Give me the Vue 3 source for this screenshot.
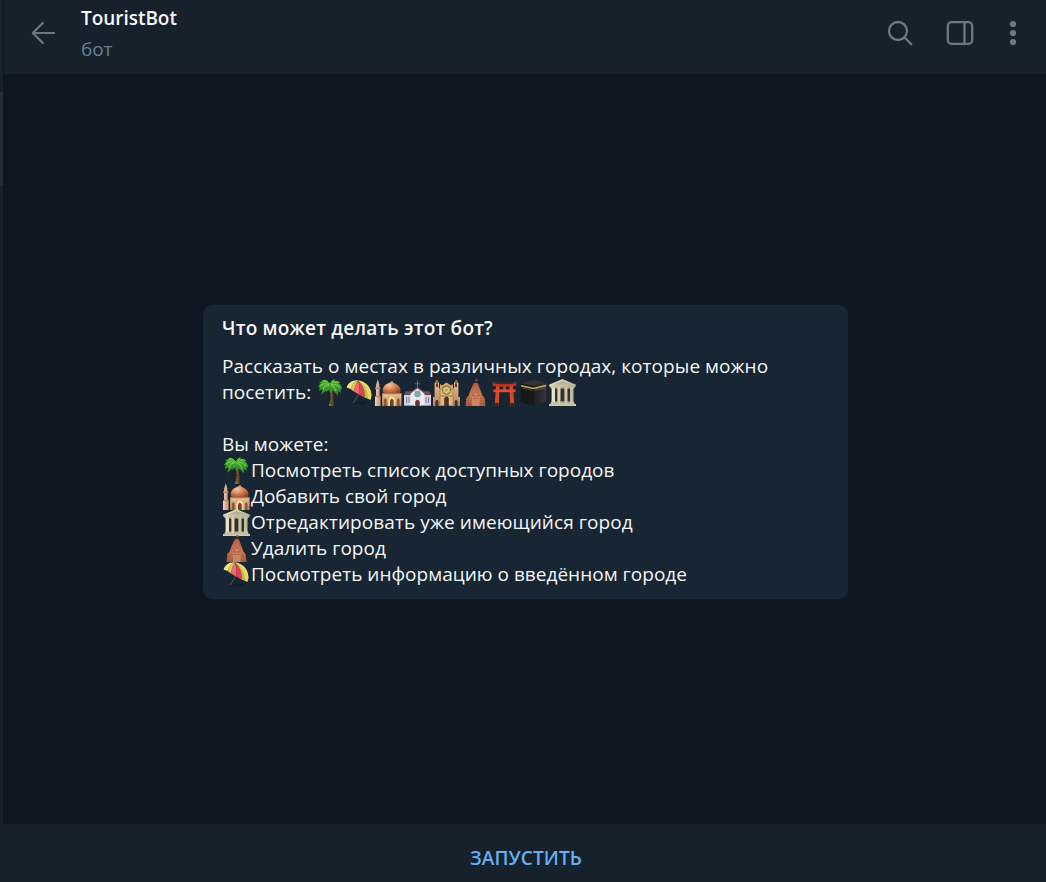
<script setup>
const places = ['palm', 'umbrella', 'mosque', 'church', 'synagogue', 'temple', 'torii', 'kaaba', 'classical']
const abilities = [
  { icon: 'palm', text: 'Посмотреть список доступных городов' },
  { icon: 'mosque', text: 'Добавить свой город', fit: 'tight' },
  { icon: 'classical', text: 'Отредактировать уже имеющийся город', fit: 'loose' },
  { icon: 'temple', text: 'Удалить город' },
  { icon: 'umbrella', text: 'Посмотреть информацию о введённом городе', fit: 'slight' },
]
</script>

<template>
  <div class="window">
    <svg class="sprites" aria-hidden="true">
      <defs>
        <linearGradient id="leaf" x1="0" y1="0" x2="0" y2="1"><stop offset="0" stop-color="#55b93a" /><stop offset="1" stop-color="#2a7d22" /></linearGradient>
        <linearGradient id="trunk"><stop offset="0" stop-color="#a07a45" /><stop offset="1" stop-color="#57401f" /></linearGradient>
        <radialGradient id="dome" cx=".35" cy=".3" r=".75"><stop offset="0" stop-color="#f6c7a4" /><stop offset=".5" stop-color="#d58354" /><stop offset="1" stop-color="#8f4526" /></radialGradient>
        <linearGradient id="sand" x1="0" y1="0" x2="0" y2="1"><stop offset="0" stop-color="#ecc392" /><stop offset="1" stop-color="#b98455" /></linearGradient>
        <linearGradient id="minaret"><stop offset="0" stop-color="#f3d0ba" /><stop offset="1" stop-color="#c98d70" /></linearGradient>
        <linearGradient id="clay" x1="0" y1="0" x2="0" y2="1"><stop offset="0" stop-color="#a95b3d" /><stop offset=".5" stop-color="#cf7f5b" /><stop offset="1" stop-color="#a95c3c" /></linearGradient>
        <linearGradient id="stone" x1="0" y1="0" x2="1" y2="0"><stop offset="0" stop-color="#ece6cc" /><stop offset="1" stop-color="#bcb596" /></linearGradient>
        <linearGradient id="cloth"><stop offset="0" stop-color="#1b1c1f" /><stop offset="1" stop-color="#37383c" /></linearGradient>

        <symbol id="palm" viewBox="0 0 27 27">
          <path d="M12.2 11Q15.3 18 11.7 27H16.5Q17.2 17 14.7 10Z" fill="url(#trunk)" />
          <path d="M13 15h2.5M13.2 18h2.8M12.9 21h3M12.3 24h3.7" stroke="#4b371d" stroke-width=".7" />
          <path d="M13 5Q9-1 5 1.3L6 2 1.8 3.2 4 4 .7 8 2.8 7.8 2 12 5.4 10 4.4 16 9.4 11.2 9.4 13.2 12.2 10.5 14.2 13 15.8 11.4 21 16.4 21.4 12 24 14 23.4 9.8 25 10.5Q25 6 21.6 4.5L23.5 3.6Q20 1 17 2.2L18 .5Q14.2 0 13 5Z" fill="url(#leaf)" />
          <path d="M12 6Q7 3 3 7M12 6Q7 6 6 11M14 6Q19 4 23 9M14 6Q18 7 19 12M13 5Q9 1 6 2M14 5Q16 2 20 3" fill="none" stroke="#79cf48" stroke-width="1" />
        </symbol>

        <symbol id="umbrella" viewBox="0 0 27 27">
          <ellipse cx="14" cy="24" rx="7" ry="1.6" fill="#0e1821" opacity=".6" />
          <path d="M14 13L7.4 24" stroke="#6a4a44" stroke-width="1" />
          <path d="M.6 8.6C2 3.8 6.8 .9 12 1.4Q6 4 4.6 10Z" fill="#f3e87e" />
          <path d="M12 1.4Q6 4 4.6 10L7.6 12.2Q9.2 5.6 12 1.4Z" fill="#dfc85c" />
          <path d="M12 1.4Q9.2 5.6 7.6 12.2L13 15.6Q14.6 8 12 1.4Z" fill="#f3696a" />
          <path d="M12 1.4Q14.6 8 13 15.6L18.4 18.4Q19.6 8.4 12 1.4Z" fill="#dc4450" />
          <path d="M12 1.4Q19.6 8.4 18.4 18.4L24.4 20.8C27.6 13.5 22.8 2.4 12 1.4Z" fill="#cdb04d" />
          <path d="M12 1.4Q22 7.4 22 19.8L24.4 20.8C27.6 13.5 22.8 2.4 12 1.4Z" fill="#e6d76a" />
        </symbol>

        <symbol id="mosque" viewBox="0 0 27 27">
          <path d="M2.8.3L4.4 5.5V8.4H5.5V10H4.7V17H5.6V27H0V17H1V10H.2V8.4H1.2V5.5Z" fill="url(#minaret)" />
          <path d="M.4 9.4H5.3M0 17.5H5.6" stroke="#a5714f" stroke-width=".8" />
          <path d="M17 2V4" stroke="#cda25e" stroke-width=".8" />
          <path d="M9 15Q5.5 9.5 11.2 5.3Q15.5 3.4 17 2.3Q18.4 4 22 5.5Q27.7 9.5 24.5 15Z" fill="url(#dome)" />
          <path d="M7.2 14.2H26.5V27H7.2Z" fill="url(#sand)" />
          <path d="M7 14.6H26.7" stroke="#b3714a" stroke-width="1.2" />
          <path d="M9 27V20.8Q10.3 17.7 11.6 20.8V27M22 27V20.8Q23.3 17.7 24.6 20.8V27" fill="#8a5a34" />
          <path d="M13 27V21.2Q13 19 16.8 16.8Q20.6 19 20.6 21.2V27Z" fill="#f3d3a1" />
          <path d="M15 27V21.7Q16.8 18 18.7 21.7V27Z" fill="#6a452c" />
        </symbol>

        <symbol id="church" viewBox="0 0 27 27">
          <path d="M13.5 2V11M11 4.8H16" stroke="#4b6caa" stroke-width="1" />
          <path d="M0 16H27V27H0Z" fill="#d4d3dc" />
          <path d="M0 15.8L1.5 12.2H25.5L27 15.8Z" fill="#6d4f55" />
          <path d="M6.5 27V14L13.5 8.4L20.5 14V27Z" fill="#eae8f0" />
          <path d="M6 14.2L13.5 8.8L21 14.2" fill="none" stroke="#7d5455" stroke-width="1.2" />
          <circle cx="13.5" cy="15" r="3.2" fill="#7fa3b6" />
          <circle cx="13.5" cy="15" r="1.5" fill="#82b18f" />
          <path d="M11.2 27V22.5Q13.5 18.8 15.8 22.5V27Z" fill="#6a302d" />
          <path d="M2.6 18V24M5 18V24M22 18V24M24.5 18V24" stroke="#7e7fae" stroke-width="1.1" />
          <path d="M0 26.5H10M17 26.5H27" stroke="#9694a4" />
        </symbol>

        <symbol id="synagogue" viewBox="0 0 27 27">
          <path d="M1.6 4L3.8 .8 6 4V10L8 7.8H19L21 10V4L23.2 .8 25.4 4V18H27V27H0V18H1.6Z" fill="url(#sand)" />
          <path d="M2 4L3.8 1 5.6 4ZM21.4 4L23.2 1 25 4Z" fill="#8f6843" />
          <path d="M3 8V5Q4 3 5 5V8M22 8V5Q23 3 24 5V8" fill="#583b25" />
          <path d="M7 10V5L9 6.5 13.5 3.5 18 6.5 20 5V10" fill="#d7ac77" />
          <path d="M7 26V11Q13.5 1.5 20 11V26" fill="#ddb985" stroke="#986e44" stroke-width=".7" />
          <circle cx="13.5" cy="11.2" r="4.1" fill="#a8924a" stroke="#806735" stroke-width=".8" />
          <path d="M13.5 7.7L16.5 12.9H10.5ZM13.5 14.6L10.5 9.4H16.5Z" fill="none" stroke="#f0df82" stroke-width=".8" />
          <path d="M11.2 27V19.5Q13.5 15 15.8 19.5V27M2.4 27V22.5Q4 19 5.4 22.5V27M21.6 27V22.5Q23.2 19 24.7 22.5V27" fill="#4e301e" />
          <path d="M7 17H20" stroke="#906540" stroke-width=".8" />
        </symbol>

        <symbol id="temple" viewBox="0 0 27 27">
          <path d="M13.8 4V0L16 1.1 14 2" fill="#d5312b" stroke="#c4372e" stroke-width=".5" />
          <path d="M12 4H15.6L18.4 11 20.5 16.8 22.6 19 23.5 27H3.5L4.4 19 6.6 16.8 9 10Z" fill="url(#clay)" />
          <path d="M11.4 5L10 17M16 5L17.6 17M9.4 12L7.6 18M18.2 12L19.8 18" fill="none" stroke="#a8613f" stroke-width=".5" />
          <path d="M10.8 16.7L13.7 12.4L16.7 16.7Z" fill="#dd9370" stroke="#8f4c36" stroke-width=".6" />
          <path d="M4.4 19.2H9.5M18 19.2H22.8M4 22H9.5M18 22H23.2M3.7 25H9.5M18 25H23.4" stroke="#8c4a33" stroke-width=".5" />
          <path d="M10 18H17.5V27H10Z" fill="#d08561" />
          <path d="M11 19.5H16.5" stroke="#965539" stroke-width=".6" />
        </symbol>

        <symbol id="torii" viewBox="0 0 27 27">
          <path d="M5 7H8.6L7.7 27H3.7ZM18.4 7H22L23.3 27H19.3Z" fill="#dc4726" />
          <path d="M12 5H15V12H12Z" fill="#cf3c20" />
          <path d="M2.5 10.4H24.5V13.2H2.5Z" fill="#e54c29" />
          <path d="M1.3 3.5Q13.5 6 25.7 3.5L25 7Q13.5 8.3 2 7Z" fill="#c53420" />
          <path d="M.3 1.8Q13.5 4.7 26.7 1.8L26.2 4Q13.5 6.5 .8 4Z" fill="#342e31" />
          <path d="M3.8 24H7.7V27H3.5ZM19.3 24H23.2L23.5 27H19.3Z" fill="#322c30" />
        </symbol>

        <symbol id="kaaba" viewBox="0 0 27 27">
          <path d="M.7 4.6L14 .6 26.3 4V22.5L14 27 .7 23Z" fill="#161719" />
          <path d="M.7 4.6L14 .6 26.3 4 13.5 7Z" fill="#333334" />
          <path d="M13.5 7L26.3 4V22.5L14 27Z" fill="url(#cloth)" />
          <path d="M.9 6.8L13.5 9.4 26.2 6.4" fill="none" stroke="#c9aa65" stroke-width="1.5" />
          <path d="M2 9.2L12.5 11.4M15 11.3L25.5 8.8" stroke="#77684a" stroke-width=".6" />
        </symbol>

        <symbol id="classical" viewBox="0 0 27 27">
          <path d="M3 8H24V24H3Z" fill="#332f2a" />
          <path d="M0 5.8L13.5 0 27 5.8L26 8.5H1Z" fill="url(#stone)" />
          <path d="M4.5 5.7L13.5 1.9 22.5 5.7Z" fill="#b7b195" />
          <path d="M2.6 8H6V24H2.6ZM8.4 8H11.5V24H8.4ZM15.4 8H18.5V24H15.4ZM21 8H24.5V24H21Z" fill="url(#stone)" />
          <path d="M2 9H25M2 23H25" stroke="#d0c9aa" stroke-width="1.1" />
          <path d="M1.6 23.5H25.4V25H27V27H0V25H1.6Z" fill="#d3ccb0" />
          <path d="M1 7H26M1 25H26" stroke="#a8a183" stroke-width=".6" />
        </symbol>
      </defs>
    </svg>

    <aside class="edge"><div class="edge-item"></div></aside>
    <main class="chat">
      <header class="topbar">
        <svg class="back" width="26" height="26" viewBox="0 0 26 26"><path d="M23 13H2M11.8 2.9L1.8 13 11.8 23.1" /></svg>
        <div class="identity">
          <div class="name">TouristBot</div>
          <div class="status">бот</div>
        </div>
        <svg class="tools" width="132" height="30" viewBox="0 0 132 30">
          <circle cx="12" cy="13" r="9" />
          <path d="M18.5 19.5L25.3 26.3" />
          <rect x="61.8" y="4.2" width="24.4" height="21.6" rx="3.7" />
          <path d="M78.5 4.5V25.5" />
          <g class="dots"><circle cx="127" cy="6" r="3.1" /><circle cx="127" cy="15" r="3.1" /><circle cx="127" cy="24" r="3.1" /></g>
        </svg>
      </header>

      <section class="history">
        <article class="card">
          <h1>Что может делать этот бот?</h1>
          <p class="summary">Рассказать о местах в различных городах, которые можно</p>
          <p class="line"><span class="lead">посетить:</span><svg v-for="p in places" :key="p" class="emoji"><use :href="'#' + p" /></svg></p>
          <p class="intro">Вы можете:</p>
          <p v-for="a in abilities" :key="a.icon" class="line"><svg class="emoji"><use :href="'#' + a.icon" /></svg><span :class="a.fit">{{ a.text }}</span></p>
        </article>
      </section>

      <button class="start">ЗАПУСТИТЬ</button>
    </main>
  </div>
</template>

<style>
body { margin: 0; background: #0e1621; }
</style>

<style scoped>
.window {
  display: flex;
  width: 1046px;
  height: 882px;
  overflow: hidden;
  font-family: "Open Sans", "Noto Sans", sans-serif;
  font-size: 19px;
  color: #f5f5f5;
}
.sprites { position: absolute; width: 0; height: 0; }
.edge {
  box-sizing: border-box;
  width: 3px;
  padding-top: 92px;
  background: #17212b;
}
.edge-item { height: 93px; background: #222e39; }
.chat { display: flex; flex: 1; flex-direction: column; }
.topbar {
  box-sizing: border-box;
  display: flex;
  height: 75px;
  padding: 0 28px 0 27px;
  background: #17212b;
  border-bottom: 1px solid #101923;
  border-left: 1px solid #101923;
}
.back { margin-top: 20px; fill: none; stroke: #6c7883; stroke-width: 2.2; stroke-linecap: round; stroke-linejoin: round; }
.identity { flex: 1; margin-left: 24px; }
.name { margin-top: 4px; line-height: 28px; font-weight: 600; letter-spacing: -.04px; }
.status { margin-top: 3px; line-height: 28px; color: #6d7f95; letter-spacing: -.1px; }
.tools { margin-top: 18px; fill: none; stroke: #6c7883; stroke-width: 2.3; stroke-linecap: round; }
.dots { fill: #6c7883; stroke: none; }
.history { display: flex; flex: 1; align-items: center; justify-content: center; padding-top: 6px; padding-left: 2px; }
.card {
  box-sizing: border-box;
  width: 645px;
  height: 294px;
  padding: 10px 19px;
  border-radius: 9px;
  background: #182533;
}
h1 { margin: 0 0 12px; font-size: 19px; line-height: 26px; font-weight: 600; letter-spacing: .2px; }
p { margin: 0; line-height: 26px; white-space: nowrap; }
.summary { letter-spacing: .055px; }
.tight { letter-spacing: -.05px; }
.slight { letter-spacing: .025px; }
.loose { letter-spacing: .086px; }
.line { display: flex; height: 26px; }
.lead { width: 94px; }
.intro { margin-top: 26px; }
.emoji { flex: none; width: 27px; height: 27px; margin: 0 1px; }
.start {
  height: 59px;
  padding: 9px 0 0 3px;
  border: 0;
  border-top: 1px solid #101923;
  background: #17212b;
  color: #64b0f2;
  font: 600 19px/26px "Open Sans", "Noto Sans", sans-serif;
  letter-spacing: .1px;
}
</style>
